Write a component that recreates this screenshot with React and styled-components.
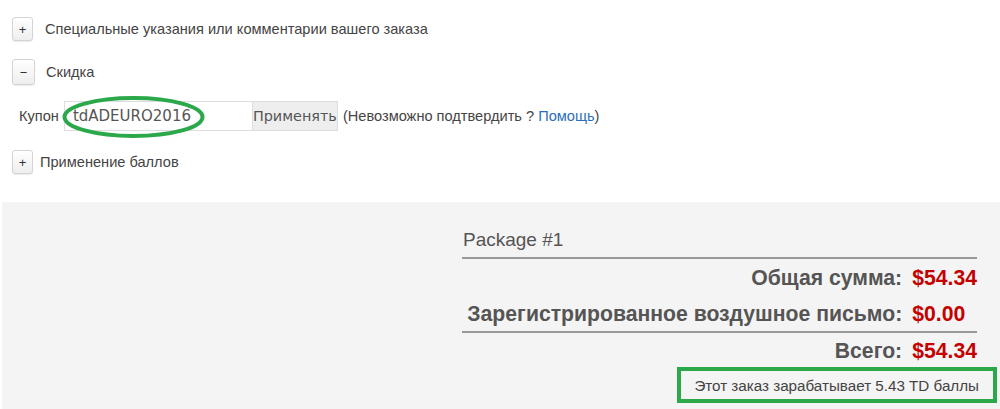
import React from "react";
import styled, { createGlobalStyle } from "styled-components";

const GlobalStyle = createGlobalStyle`
  html, body {
    margin: 0;
    padding: 0;
    background: #fff;
    font-family: "Liberation Sans", Arial, sans-serif;
    font-size: 14.6px;
    color: #444;
  }
`;

const Page = styled.div`
  width: 1000px;
  height: 409px;
  overflow: hidden;
  display: flex;
  flex-direction: column;
`;

const Options = styled.div`
  padding: 17px 0 0 12px;
  height: 202px;
  flex-shrink: 0;
  box-sizing: border-box;
`;

const ToggleRow = styled.div`
  display: flex;
  align-items: center;
  gap: ${(p) => p.$gap || 12}px;
  margin-bottom: ${(p) => p.$mb || 0}px;
  color: #444;
`;

const Toggle = styled.button`
  width: ${(p) => p.$w || 21}px;
  height: ${(p) => p.$h || 24}px;
  padding: 0;
  border: 1px solid #d4d4d4;
  border-radius: 3px;
  background: linear-gradient(#ffffff, #eeeeee);
  box-shadow: 0 1px 1px rgba(0, 0, 0, 0.08);
  font-family: "Liberation Sans", Arial, sans-serif;
  font-size: 13px;
  color: #333;
  display: flex;
  align-items: center;
  justify-content: center;
`;

const CouponRow = styled.div`
  display: flex;
  align-items: center;
  height: 30px;
  margin: 0 0 19px 7px;
`;

const Label = styled.span`
  margin-right: 5px;
`;

const CouponField = styled.div`
  position: relative;
  display: flex;
`;

const CouponInput = styled.input`
  width: 188px;
  height: 30px;
  box-sizing: border-box;
  border: 1px solid #ddd;
  border-right: none;
  padding: 0 8px;
  font-family: "DejaVu Sans", Verdana, sans-serif;
  font-size: 15px;
  color: #555;
  background: #fff;
  outline: none;
`;

const ApplyButton = styled.button`
  width: 86px;
  height: 30px;
  border: 1px solid #ddd;
  background: #eeeeee;
  font-family: "DejaVu Sans", Verdana, sans-serif;
  font-size: 14.4px;
  color: #555;
  padding: 0;
`;

const Ellipse = styled.svg`
  position: absolute;
  left: -2px;
  top: -5px;
  width: 143px;
  height: 42px;
  pointer-events: none;
`;

const Hint = styled.span`
  margin-left: 5px;
  color: #444;
`;

const HelpLink = styled.a`
  color: #2a6ebb;
  text-decoration: none;
`;

const Summary = styled.section`
  flex: 1;
  margin-left: 2px;
  background: #f4f4f4;
  display: flex;
  justify-content: flex-start;
`;

const Panel = styled.div`
  margin-left: 460px;
  width: 515px;
  display: flex;
  flex-direction: column;
`;

const PackageTitle = styled.div`
  padding: 27px 0 6px 1px;
  line-height: 22px;
  font-size: 19px;
  color: #555;
  border-bottom: 2px solid #999;
`;

const Totals = styled.div`
  display: grid;
  grid-template-columns: 1fr auto;
  column-gap: 10px;
  border-bottom: 2px solid #999;
`;

const Cell = styled.div`
  height: 36px;
  line-height: 37px;
  font-size: 21.2px;
  font-weight: bold;
  white-space: nowrap;
  color: ${(p) => (p.$price ? "#c40000" : "#555")};
  text-align: ${(p) => (p.$price ? "left" : "right")};
`;

const Grand = styled.div`
  display: grid;
  grid-template-columns: 1fr auto;
  column-gap: 10px;
`;

const GrandCell = styled(Cell)`
  height: 34px;
  line-height: 36px;
`;

const Points = styled.div`
  align-self: flex-end;
  margin-right: -20px;
  width: 320px;
  height: 36px;
  box-sizing: border-box;
  border: 4px solid #2aa84a;
  padding-right: 14px;
  display: flex;
  align-items: center;
  justify-content: flex-end;
  font-size: 15.2px;
  color: #444;
`;

export default function App() {
  return (
    <Page>
      <GlobalStyle />
      <Options>
        <ToggleRow $mb={18}>
          <Toggle>+</Toggle>
          <span>Специальные указания или комментарии вашего заказа</span>
        </ToggleRow>
        <ToggleRow $mb={16} $gap={11}>
          <Toggle $w={23} $h={26}>−</Toggle>
          <span>Скидка</span>
        </ToggleRow>
        <CouponRow>
          <Label>Купон</Label>
          <CouponField>
            <CouponInput defaultValue="tdADEURO2016" />
            <ApplyButton>Применять</ApplyButton>
            <Ellipse viewBox="0 0 143 42">
              <ellipse
                cx="71.5"
                cy="21"
                rx="69"
                ry="19"
                fill="none"
                stroke="#2aa84a"
                strokeWidth="4"
              />
            </Ellipse>
          </CouponField>
          <Hint>
            (Невозможно подтвердить ? <HelpLink href="#">Помощь</HelpLink>)
          </Hint>
        </CouponRow>
        <ToggleRow $gap={7}>
          <Toggle>+</Toggle>
          <span>Применение баллов</span>
        </ToggleRow>
      </Options>
      <Summary>
        <Panel>
          <PackageTitle>Package #1</PackageTitle>
          <Totals>
            <Cell>Общая сумма:</Cell>
            <Cell $price>$54.34</Cell>
            <Cell>Зарегистрированное воздушное письмо:</Cell>
            <Cell $price>$0.00</Cell>
          </Totals>
          <Grand>
            <GrandCell>Всего:</GrandCell>
            <GrandCell $price>$54.34</GrandCell>
          </Grand>
          <Points>Этот заказ зарабатывает 5.43 TD баллы</Points>
        </Panel>
      </Summary>
    </Page>
  );
}
